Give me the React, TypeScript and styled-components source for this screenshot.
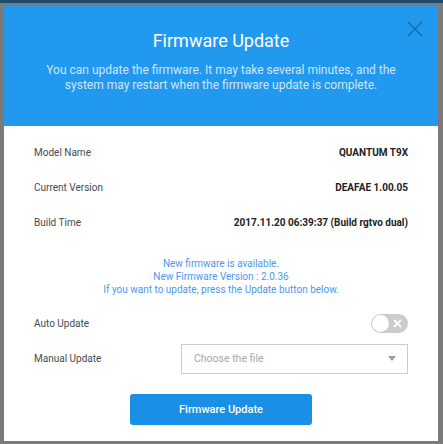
import React, { useState } from 'react';
import styled, { createGlobalStyle } from 'styled-components';

const GlobalStyle = createGlobalStyle`
    html, body {
        margin: 0;
        padding: 0;
        height: 100%;
    }
    body {
        font-family: Roboto, "Liberation Sans", Arial, sans-serif;
        background: #7a7a7a;
    }
`

const Backdrop = styled.div`
    width: 443px;
    height: 444px;
    box-sizing: border-box;
    background: #7a7a7a;
    border-top: 3px solid #1f4a6b;
    padding: 3px 5px 3px 4px;
    display: flex;
`

const Modal = styled.div`
    flex: 1;
    display: flex;
    flex-direction: column;
    background: #ffffff;
    position: relative;
`

const Header = styled.header`
    height: 122px;
    box-sizing: border-box;
    background: #2199ef;
    padding-top: 23px;
    display: flex;
    flex-direction: column;
    align-items: center;
    color: #ffffff;
`

const Title = styled.h2`
    margin: 0;
    font-size: 18px;
    line-height: 24px;
    font-weight: 400;
`

const Subtitle = styled.p`
    margin: 10px 0 0;
    font-size: 12px;
    line-height: 15px;
    text-align: center;
    color: #cfe6fb;
    max-width: 360px;
`

const CloseButton = styled.button`
    position: absolute;
    top: 15px;
    right: 15px;
    width: 16px;
    height: 16px;
    padding: 0;
    border: none;
    background: none;
    cursor: pointer;
    display: flex;
`

const Body = styled.div`
    padding: 9px 30px 0;
    display: flex;
    flex-direction: column;
`

const Row = styled.div`
    height: 35px;
    display: flex;
    align-items: center;
    justify-content: space-between;
`

const Label = styled.span`
    font-size: 10px;
    color: #444a50;
`

const Value = styled.span`
    font-size: 10px;
    font-weight: 700;
    color: #222222;
`

const Notice = styled.div`
    margin: 17px 0 10px;
    text-align: center;
    font-size: 10px;
    line-height: 13px;
    color: #4a98f0;
`

const Toggle = styled.button<{ $on: boolean }>`
    width: 37px;
    height: 19px;
    border-radius: 10px;
    border: none;
    padding: 0;
    background: ${p => (p.$on ? '#2199ef' : '#cccccc')};
    position: relative;
    cursor: pointer;
    display: flex;
    align-items: center;
    justify-content: flex-end;
    padding-right: 6px;
    box-sizing: border-box;
`

const Knob = styled.span<{ $on: boolean }>`
    position: absolute;
    top: 1px;
    left: ${p => (p.$on ? '19px' : '1px')};
    width: 17px;
    height: 17px;
    border-radius: 50%;
    background: #ffffff;
`

const Select = styled.div`
    width: 227px;
    height: 30px;
    box-sizing: border-box;
    border: 1px solid #cccccc;
    display: flex;
    align-items: center;
    justify-content: space-between;
    padding: 0 11px 0 12px;
    font-size: 10.5px;
    color: #a8a8a8;
`

const Caret = styled.span`
    width: 0;
    height: 0;
    border-left: 4px solid transparent;
    border-right: 4px solid transparent;
    border-top: 5px solid #9a9a9a;
`

const Footer = styled.div`
    display: flex;
    justify-content: center;
    padding: 18px 0 16px;
`

const SubmitButton = styled.button`
    width: 182px;
    height: 31px;
    border: none;
    border-radius: 3px;
    background: #1a8fe6;
    color: #ffffff;
    font-family: inherit;
    font-size: 11px;
    font-weight: 500;
    cursor: pointer;
`

const info = [
    { label: 'Model Name', value: 'QUANTUM T9X' },
    { label: 'Current Version', value: 'DEAFAE 1.00.05' },
    { label: 'Build Time', value: '2017.11.20 06:39:37 (Build rgtvo dual)' },
];

const App: React.FC = () => {
    const [auto, setAuto] = useState(false);

    return (
        <>
            <GlobalStyle />
            <Backdrop>
                <Modal>
                    <Header>
                        <Title>Firmware Update</Title>
                        <Subtitle>
                            You can update the firmware. It may take several minutes, and the
                            system may restart when the firmware update is complete.
                        </Subtitle>
                    </Header>
                    <CloseButton aria-label="Close">
                        <svg width="16" height="16" viewBox="0 0 16 16">
                            <path d="M1 1L15 15M15 1L1 15" stroke="#1663a3" strokeWidth="1.2" fill="none" />
                        </svg>
                    </CloseButton>
                    <Body>
                        {info.map(item => (
                            <Row key={item.label}>
                                <Label>{item.label}</Label>
                                <Value>{item.value}</Value>
                            </Row>
                        ))}
                        <Notice>
                            New firmware is available.<br />
                            New Firmware Version : 2.0.36<br />
                            If you want to update, press the Update button below.
                        </Notice>
                        <Row>
                            <Label>Auto Update</Label>
                            <Toggle $on={auto} onClick={() => setAuto(!auto)}>
                                <Knob $on={auto} />
                                <svg width="9" height="9" viewBox="0 0 9 9">
                                    <path d="M1 1L8 8M8 1L1 8" stroke="#ffffff" strokeWidth="1.8" fill="none" />
                                </svg>
                            </Toggle>
                        </Row>
                        <Row>
                            <Label>Manual Update</Label>
                            <Select>
                                Choose the file
                                <Caret />
                            </Select>
                        </Row>
                    </Body>
                    <Footer>
                        <SubmitButton>Firmware Update</SubmitButton>
                    </Footer>
                </Modal>
            </Backdrop>
        </>
    );
};

export default App;
